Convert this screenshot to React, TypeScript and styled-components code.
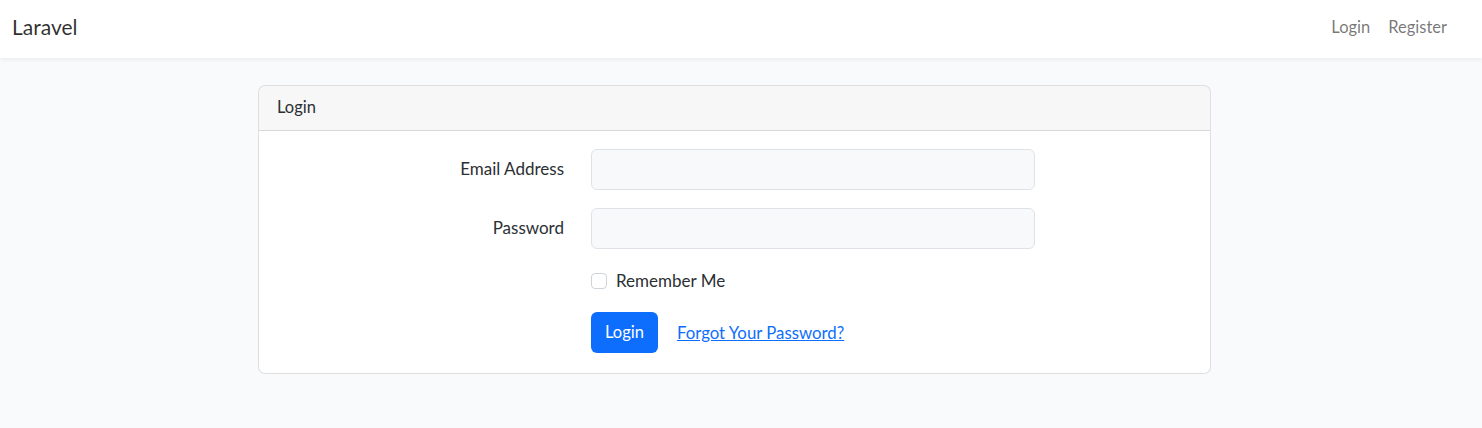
import React from 'react';
import styled, {createGlobalStyle} from "styled-components";

const GlobalStyle = createGlobalStyle`
  html, body {
    margin: 0;
    padding: 0;
    background: #f8fafc;
    font-family: Lato, "Noto Sans", sans-serif;
    color: #2b2f33;
  }
  * { box-sizing: border-box; }
`

const Navbar = styled.nav`
  height: 58px;
  background: #fff;
  box-shadow: 0 2px 4px rgba(0, 0, 0, .06);
  display: flex;
  align-items: center;
  justify-content: space-between;
  padding: 0 35px 5px 12px;
`

const Brand = styled.a`
  font-size: 21px;
  color: rgba(0, 0, 0, .82);
  text-decoration: none;
`

const NavLinks = styled.div`
  display: flex;
  gap: 18px;
`

const NavLink = styled.a`
  font-size: 16.5px;
  color: rgba(0, 0, 0, .55);
  text-decoration: none;
`

const Main = styled.main`
  padding: 27px 0 0 258px;
`

const Card = styled.div`
  width: 953px;
  background: #fff;
  border: 1px solid rgba(0, 0, 0, .125);
  border-radius: 7px;
  overflow: hidden;
`

const CardHeader = styled.div`
  height: 45px;
  display: flex;
  align-items: center;
  padding: 0 18px 3px;
  background: rgba(0, 0, 0, .03);
  border-bottom: 1px solid rgba(0, 0, 0, .125);
  font-size: 16.5px;
`

const CardBody = styled.div`
  padding: 18px 18px 20px;
  display: flex;
  flex-direction: column;
  gap: 18px;
`

const Row = styled.div`
  display: grid;
  grid-template-columns: 287px 444px;
  column-gap: 27px;
  align-items: center;
  min-height: 27px;
`

const Label = styled.label`
  text-align: right;
  font-size: 17px;
  padding-bottom: 2px;
`

const Input = styled.input`
  height: 41px;
  width: 100%;
  border: 1px solid #dee2e6;
  border-radius: 6px;
  background: #f8f9fa;
  font-size: 16px;
  padding: 6px 13px;
`

const Check = styled.label`
  grid-column: 2;
  display: flex;
  align-items: center;
  gap: 9px;
  font-size: 17px;
`

const Box = styled.span`
  width: 16px;
  height: 16px;
  border: 1px solid #cfd4d9;
  border-radius: 4px;
  background: #fff;
`

const Actions = styled.div`
  grid-column: 2;
  display: flex;
  align-items: center;
  gap: 19px;
`

const Button = styled.button`
  height: 41px;
  padding: 0 14px 2px;
  background: #0d6efd;
  color: #fff;
  border: none;
  border-radius: 6px;
  font-family: inherit;
  font-size: 16.5px;
`

const Link = styled.a`
  color: #0d6efd;
  font-size: 16.8px;
  text-decoration: underline;
`

export default function App() {
    return (
        <>
            <GlobalStyle/>
            <Navbar>
                <Brand href="#">Laravel</Brand>
                <NavLinks>
                    <NavLink href="#">Login</NavLink>
                    <NavLink href="#">Register</NavLink>
                </NavLinks>
            </Navbar>
            <Main>
                <Card>
                    <CardHeader>Login</CardHeader>
                    <CardBody>
                        <Row>
                            <Label>Email Address</Label>
                            <Input type="email"/>
                        </Row>
                        <Row>
                            <Label>Password</Label>
                            <Input type="password"/>
                        </Row>
                        <Row>
                            <Check><Box/>Remember Me</Check>
                        </Row>
                        <Row>
                            <Actions>
                                <Button>Login</Button>
                                <Link href="#">Forgot Your Password?</Link>
                            </Actions>
                        </Row>
                    </CardBody>
                </Card>
            </Main>
        </>
    );
}
